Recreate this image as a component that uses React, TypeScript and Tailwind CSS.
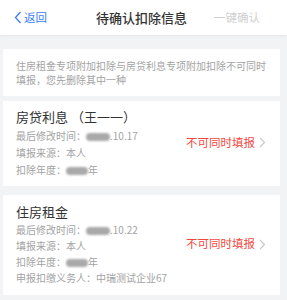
import React from "react";

const Blob = ({ w }: { w: number }) => (
  <span
    className="inline-block h-[8px] rounded-full bg-[#a9a9a9] align-middle blur-[1.2px]"
    style={{ width: w }}
  />
);

const Chevron = () => (
  <svg width="7" height="11" viewBox="0 0 7 11" className="ml-[4px]">
    <path d="M1 1l4.5 4.5L1 10" fill="none" stroke="#c8c8c8" strokeWidth="1.1" />
  </svg>
);

export default function App() {
  const font = { fontFamily: '"Noto Sans CJK SC", "Noto Sans", sans-serif' };
  return (
    <div className="h-[300px] w-[287px] overflow-hidden bg-[#f2f3f5]" style={font}>
      <div className="relative flex h-[35px] items-center bg-white shadow-[0_1px_2px_rgba(0,0,0,0.06)]">
        <div className="flex items-center pl-[14px] text-[11.5px] text-[#3c7ef5]">
          <svg width="8" height="13" viewBox="0 0 8 13">
            <path d="M6.5 1L1.5 6.5L6.5 12" fill="none" stroke="#3c7ef5" strokeWidth="1.3" />
          </svg>
          <span className="ml-[2px]">返回</span>
        </div>
        <div className="absolute left-[96px] top-0 flex h-[35px] items-center text-[13px] font-medium text-[#333]">
          待确认扣除信息
        </div>
        <div className="ml-auto pr-[27px] text-[11.5px] text-[#cfcfcf]">一键确认</div>
      </div>

      <div className="mt-[14px] ml-[3px] w-[277px] bg-white pl-[13px] pr-[10px] pt-[10px] pb-[9px] text-[10px] leading-[14px] text-[#a3a3a3]">
        住房租金专项附加扣除与房贷利息专项附加扣除不可同时填报，您先删除其中一种
      </div>

      <div className="mt-[5px] ml-[3px] flex w-[277px] items-center bg-white pl-[13px] pr-[14px] pt-[6px] pb-[8px]">
        <div className="flex-1">
          <div className="text-[13px] leading-[20px] text-[#333]">房贷利息 （王一一）</div>
          <div className="text-[10px] leading-[17px] text-[#a3a3a3]">
            最后修改时间：<Blob w={24} />.10.17
          </div>
          <div className="text-[10px] leading-[17px] text-[#a3a3a3]">填报来源：本人</div>
          <div className="text-[10px] leading-[17px] text-[#a3a3a3]">
            扣除年度：<Blob w={22} />年
          </div>
        </div>
        <div className="flex items-center text-[11.5px] text-[#f2473c]">
          不可同时填报
          <Chevron />
        </div>
      </div>

      <div className="mt-[9px] ml-[3px] flex w-[277px] items-center bg-white pl-[13px] pr-[14px] pt-[7px] pb-[9px]">
        <div className="flex-1">
          <div className="text-[13px] leading-[20px] text-[#333]">住房租金</div>
          <div className="text-[10px] leading-[16px] text-[#a3a3a3]">
            最后修改时间：<Blob w={24} />.10.22
          </div>
          <div className="text-[10px] leading-[16px] text-[#a3a3a3]">填报来源：本人</div>
          <div className="text-[10px] leading-[16px] text-[#a3a3a3]">
            扣除年度：<Blob w={22} />年
          </div>
          <div className="text-[10px] leading-[16px] text-[#a3a3a3]">申报扣缴义务人：中瑞测试企业67</div>
        </div>
        <div className="flex items-center text-[11.5px] text-[#f2473c]">
          不可同时填报
          <Chevron />
        </div>
      </div>
    </div>
  );
}
